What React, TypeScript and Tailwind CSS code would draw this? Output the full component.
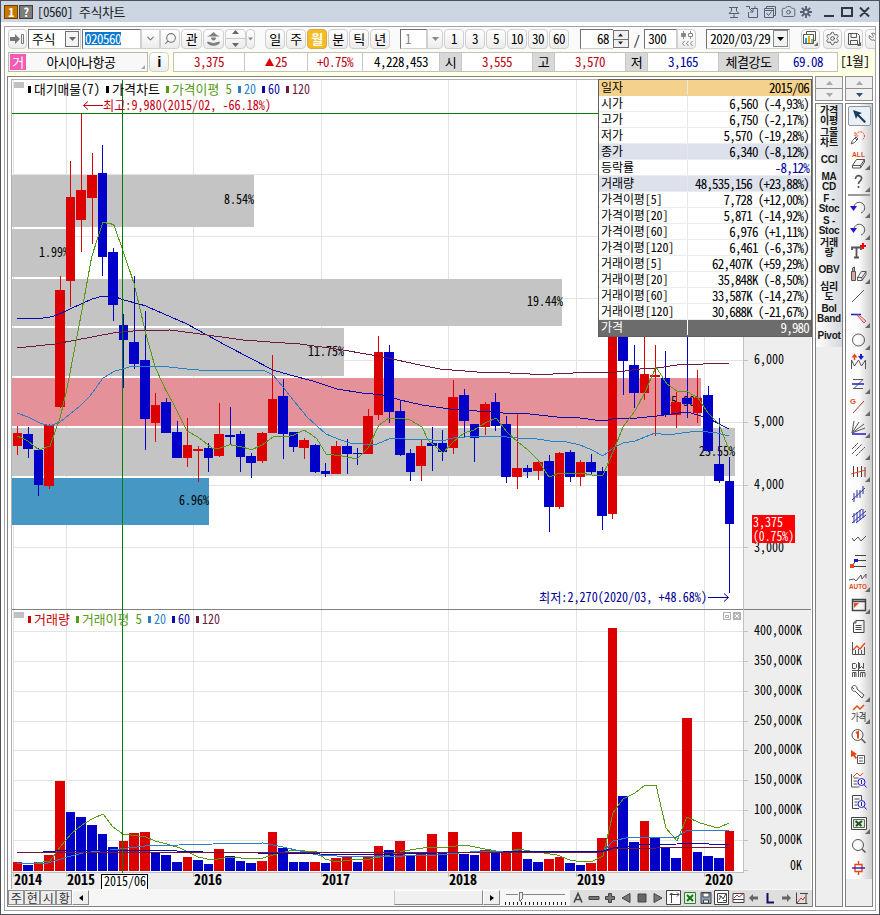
import type { ReactNode } from 'react';
import { Camera, ChevronDown, CopyCheck, Search, Settings, Wrench } from 'lucide-react';
import clsx from 'clsx';

const RED = '#dd0000';
const BLUE = '#0000c8';

const slotX = (i: number) => Math.floor(13.05 + 10.627 * i);

// left edge, body width and wick position of the i-th month
const slot = (i: number) => {
  const x = slotX(i);
  const w = slotX(i + 1) - x - 1;
  return { x, w, mid: x + Math.floor(w / 2) };
};

// --- DATA ---
type Candle = ['R' | 'B', number, number, number, number];

// [direction, high, body top, body bottom, low]
const CANDLES: Candle[] = [
  ['R', 426, 433, 446, 455], ['B', 427, 434, 449, 458], ['B', 448, 450, 485, 496], ['R', 424, 425, 486, 489],
  ['R', 276, 290, 407, 408], ['R', 161, 197, 281, 307], ['R', 113, 190, 220, 252], ['R', 153, 175, 198, 244],
  ['B', 145, 173, 257, 276], ['B', 248, 252, 305, 321], ['B', 314, 325, 340, 388], ['B', 276, 342, 364, 369],
  ['B', 311, 360, 419, 450], ['R', 393, 405, 423, 442], ['B', 398, 402, 433, 433], ['B', 421, 432, 458, 458],
  ['R', 418, 445, 458, 467], ['R', 446, 449, 451, 482], ['B', 443, 448, 458, 472], ['R', 403, 434, 456, 457],
  ['B', 407, 435, 437, 444], ['B', 431, 434, 457, 472], ['B', 453, 456, 463, 478], ['R', 432, 433, 461, 463],
  ['R', 355, 399, 433, 433], ['B', 379, 396, 434, 459], ['B', 432, 432, 447, 452], ['R', 438, 440, 448, 459],
  ['B', 444, 445, 472, 473], ['B', 463, 471, 474, 477], ['R', 441, 446, 474, 474], ['B', 439, 446, 454, 474],
  ['B', 448, 453, 454, 465], ['R', 409, 416, 454, 454], ['R', 336, 352, 415, 420], ['B', 345, 352, 412, 423],
  ['B', 400, 411, 455, 456], ['B', 449, 453, 472, 481], ['R', 440, 446, 466, 481], ['B', 427, 443, 446, 471],
  ['B', 430, 443, 452, 461], ['R', 380, 397, 448, 454], ['B', 389, 395, 421, 437], ['B', 424, 424, 438, 462],
  ['R', 402, 404, 427, 435], ['B', 393, 402, 426, 431], ['B', 416, 424, 477, 483], ['R', 414, 468, 477, 489],
  ['B', 465, 468, 472, 478], ['R', 461, 462, 471, 480], ['B', 455, 461, 507, 532], ['R', 452, 453, 507, 509],
  ['B', 450, 452, 477, 482], ['R', 460, 462, 477, 486], ['B', 454, 462, 472, 474], ['B', 467, 471, 516, 530],
  ['R', 290, 300, 514, 519], ['B', 290, 310, 361, 395], ['B', 345, 365, 393, 408], ['R', 330, 374, 393, 400],
  ['R', 345, 375, 377, 436], ['B', 351, 378, 415, 417], ['R', 392, 402, 415, 428], ['B', 320, 398, 404, 418],
  ['R', 370, 398, 413, 423], ['B', 386, 395, 451, 452], ['B', 418, 464, 481, 483], ['B', 457, 481, 524, 593],
];

const VOLUMES =
  'R862 B865 R862 R855 R781 B812 B817 B825 B834 B847 R841 R833 R832 B852 B855 B862 R857 B860 B864 R849 B856 B861 B863 R861 R832 B848 B862 B862 R862 B863 R858 R856 B862 R857 R846 B850 R841 B856 R852 R834 B852 R832 B854 B855 R850 B852 R852 R832 B859 B862 R859 R857 B863 B865 R863 R838 R628 B796 B842 R821 B838 B847 B858 R718 B852 B856 B858 R831'.split(' ');

const PRICE_LINES = [
  { color: '#2a7fc8', points: '17,413 28,417 40,423 50,426 60,422 80,406 90,396 103,378 115,371 133,366 160,366 187,369 210,371 233,370 263,370 273,375 283,387 290,396 307,417 326,434 338,439 350,443 363,444 377,444 389,439 400,438 410,440 423,439 442,441 453,438 477,436 507,437 517,438 537,439 550,441 567,442 580,445 592,450 603,456 613,448 623,443 635,441 655,433 667,435 698,431 717,433 729,436' },
  { color: '#0a0aaa', points: '17,319 43,318 52,316.7 60,313.7 72,308 92,299 103,296 115,296.7 123,299.7 145,305.7 187,324 227,346 273,370 290,375 313,381 337,389 362,393 383,395 400,400 422,405 450,409 477,411 495,411 503,413 530,414 557,417 580,418 603,421 617,418 637,418 657,416 687,412 698,415 710,419 719,424 729,429' },
  { color: '#6e1a40', points: '17,348 55,344 92,337 113,333 133,331 170,330 200,334 243,340 270,342 300,344 343,350 383,357 420,365 440,369 477,372 510,373 530,374 553,374 573,373 617,372 640,369 657,368 677,365 703,364 729,363' },
  { color: '#559a14', points: '17,436 22,438 28,441 39,450 50,446 60,418 66.7,390 81.7,311.7 91.7,256.7 102.7,222.7 110,223.3 114,225.3 122.7,250 134,283.3 145.7,333.3 155,366.7 165.7,390 173,403 187,431 198,437 212,448 218,448.7 230,444.7 241.7,447 251.7,449.7 262,445 273,437 283,436.7 293,435.7 304,430 312,435 317,439 326,454 340,455.7 357,459 368,448 379,425 389,418 400,418 410,420 422,427 428,440 443,453 453,442 464,433 474,430 485,423 496,418 507,432 518,442 528,450 538,460 549,477 560,473 570,474 581,473 592,475 603,475 613,452 623,427 635,411 645,392 656,367 667,384 677,391 688,392 698,398 708,413 719,424 729,450' },
];

const VOLUME_LINES = [
  { color: '#559a14', points: '17,863 30,864 50,861 60,847 72,833 82,825 92,819 103,814 113,827 123,834 146,837 155,841 167,844 180,848 188,852 198,857 212,860 230,857 252,859 263,858 273,855 293,850 317,852 325,859 337,862 350,860 370,859 390,855 403,851 430,847 448,847 465,845 485,849 507,853 517,849 537,852 557,855 570,860 582,862 593,861 603,856 613,813 623,799 635,793 645,785 656,785 666,828 677,841 687,817 700,823 718,828 729,823' },
  { color: '#2a7fc8', points: '17,864 48,863 67,857 83,853 100,851 120,849 145,846 213,844 263,843 283,847 300,851 318,855 337,856 370,857 437,855 470,852 517,851 603,852 613,841 630,837 657,837 675,838 688,830 729,830' },
  { color: '#0a0aaa', points: '43,852 67,850 150,850 203,852 257,853 320,854 370,855 437,853 503,852 513,851 603,851 613,848 637,845 677,844 688,843 729,845' },
  { color: '#6e1a40', points: '17,853 370,852 603,852 613,849 657,848 729,847' },
];

// volume profile bars
const PROFILE = [
  { y: 175, h: 52, x2: 254, color: '#c4c4c4', label: '8.54%', base: 204, end: 254 },
  { y: 229, h: 48, x2: 67, color: '#c4c4c4', label: '1.99%', base: 257, end: 69 },
  { y: 279, h: 47, x2: 562, color: '#c4c4c4', label: '19.44%', base: 306, end: 563 },
  { y: 328, h: 48, x2: 344, color: '#c4c4c4', label: '11.75%', base: 356, end: 344 },
  { y: 378, h: 48, x2: 701, color: '#e59199', label: '25.90%', base: 406, end: 701 },
  { y: 428, h: 48, x2: 735, color: '#c4c4c4', label: '25.55%', base: 456, end: 735 },
  { y: 478, h: 47, x2: 209, color: '#4697c4', label: '6.96%', base: 505, end: 209 },
];

const YEARS: [string, number][] = [['2014', 13], ['2015', 66], ['2016', 193], ['2017', 321], ['2018', 448], ['2019', 576], ['2020', 704]];
const PRICE_GRID = [174, 236, 298, 360, 422, 485, 547];
const VOLUME_GRID: [string, number][] = [
  ['400,000K', 631], ['350,000K', 661], ['300,000K', 691], ['250,000K', 721],
  ['200,000K', 750], ['150,000K', 780], ['100,000K', 810], ['50,000K', 840],
];

const QUOTE_ROWS: [string, string][] = [
  ['일자', '2015/06'],
  ['시가', '6,560 (-4,93%)'],
  ['고가', '6,750 (-2,17%)'],
  ['저가', '5,570 (-19,28%)'],
  ['종가', '6,340 (-8,12%)'],
  ['등락률', '-8,12%'],
  ['거래량', '48,535,156 (+23,88%)'],
  ['가격이평[5]', '7,728 (+12,00%)'],
  ['가격이평[20]', '5,871 (-14,92%)'],
  ['가격이평[60]', '6,976 (+1,11%)'],
  ['가격이평[120]', '6,461 (-6,37%)'],
  ['거래이평[5]', '62,407K (+59,29%)'],
  ['거래이평[20]', '35,848K (-8,50%)'],
  ['거래이평[60]', '33,587K (-14,27%)'],
  ['거래이평[120]', '30,688K (-21,67%)'],
  ['가격', '9,980'],
];

// --- CHART ---
interface LabelProps {
  x: number;
  y: number;
  w: number;
  fill?: string;
  bold?: boolean;
  children: string;
}

function Label({ x, y, w, fill = '#000', bold, children }: LabelProps) {
  return (
    <text x={x} y={y} fill={fill} fontSize={bold ? 14 : 13} fontWeight={bold ? 700 : 400} textLength={w} lengthAdjust="spacingAndGlyphs" className="whitespace-pre tracking-normal">
      {children}
    </text>
  );
}

function Legend({ y, items }: { y: number; items: [string, number, number, string][] }) {
  return (
    <g>
      <rect x={14} y={y - 12} width={10} height={6} fill="#c0c0c0" />
      {items.map(([text, x, w, color]) => (
        <g key={text}>
          <rect x={x} y={y - 8} width={3} height={7} fill={color} />
          <Label x={x + 6} y={y} w={w} fill={color}>{text}</Label>
        </g>
      ))}
    </g>
  );
}

function StockChart() {
  return (
    <svg width="799" height="809" viewBox="12 80 799 809" className="block bg-white">
      <g shapeRendering="crispEdges">
        <rect x={744} y={80} width={67} height={809} fill="#eeeeee" />
        <rect x={12} y={873} width={799} height={16} fill="#eeeeee" />
        <g fill="#e3e3e3">
          {YEARS.map(([year, x]) => <rect key={year} x={x} y={80} width={1} height={792} />)}
          {PRICE_GRID.map((y) => <rect key={y} x={13} y={y} width={731} height={1} />)}
          {VOLUME_GRID.map(([t, y]) => <rect key={t} x={13} y={y} width={731} height={1} />)}
        </g>
        {PROFILE.map((b) => <rect key={b.y} x={12} y={b.y} width={b.x2 - 12} height={b.h} fill={b.color} />)}
      </g>
      {PROFILE.map((b) => (
        <Label key={b.y} x={b.end - b.label.length * 6} y={b.base} w={b.label.length * 6}>{b.label}</Label>
      ))}
      <g shapeRendering="crispEdges">
        {CANDLES.map(([dir, high, top, bottom, low], i) => {
          const { x, w, mid } = slot(i);
          return (
            <g key={i} fill={dir === 'R' ? RED : BLUE}>
              <rect x={mid} y={high} width={1} height={low - high} />
              <rect x={x} y={top} width={w} height={Math.max(bottom - top, 1)} />
            </g>
          );
        })}
        {VOLUMES.map((v, i) => {
          const { x, w } = slot(i);
          const top = Number(v.slice(1));
          return <rect key={i} x={x} y={top} width={w} height={871 - top} fill={v[0] === 'R' ? RED : BLUE} />;
        })}
        {[...PRICE_LINES, ...VOLUME_LINES].map((l) => (
          <polyline key={l.points} points={l.points} fill="none" stroke={l.color} strokeWidth={1} />
        ))}
        <rect x={12} y={609} width={799} height={1} fill="#808080" />
        <rect x={12} y={872} width={732} height={1} fill="#c0c0c0" />
        <rect x={743} y={80} width={1} height={793} fill="#c0c0c0" />
        {[...PRICE_GRID, ...VOLUME_GRID.map((v) => v[1]), 870].map((y) => (
          <rect key={y} x={744} y={y} width={4} height={1} fill="#c0c0c0" />
        ))}
        {YEARS.map(([year, x]) => <rect key={year} x={x} y={873} width={1} height={4} fill="#c0c0c0" />)}
        <rect x={12} y={113} width={731} height={1} fill="#008000" />
        <rect x={122} y={80} width={1} height={793} fill="#008000" />
      </g>

      <Legend
        y={94}
        items={[
          ['대기매물(7)', 28, 66, '#000'],
          ['가격차트', 106, 48, '#000'],
          ['가격이평 5', 166, 60, '#559a14'],
          ['20', 238, 12, '#2a7fc8'],
          ['60', 262, 12, '#0a0aaa'],
          ['120', 286, 18, '#6e1a40'],
        ]}
      />
      <Legend
        y={624}
        items={[
          ['거래량', 28, 36, '#cc0000'],
          ['거래이평 5', 76, 60, '#559a14'],
          ['20', 148, 12, '#2a7fc8'],
          ['60', 172, 12, '#0a0aaa'],
          ['120', 196, 18, '#6e1a40'],
        ]}
      />

      <path d="M103 105.5H83.5M88 101.5L83.5 105.5L88 109.5" fill="none" stroke="#c00010" />
      <Label x={103} y={110} w={168} fill="#c00010">최고:9,980(2015/02, -66.18%)</Label>
      <path d="M708 597.5H728M724 593.5L728.5 597.5L724 601.5" fill="none" stroke="#000090" />
      <Label x={539} y={602} w={168} fill="#000090">최저:2,270(2020/03, +48.68%)</Label>

      {['6,000', '5,000', '4,000', '3,000'].map((t, i) => (
        <Label key={t} x={754} y={[364, 426, 489, 552][i]} w={30}>{t}</Label>
      ))}
      <rect x={752} y={515} width={43} height={28} fill="#ff0000" />
      <Label x={753} y={527} w={30} fill="#fff">3,375</Label>
      <Label x={753} y={541} w={41} fill="#fff">(0.75%)</Label>
      {VOLUME_GRID.map(([t, y]) => (
        <Label key={t} x={802 - t.length * 6} y={y + 4} w={t.length * 6}>{t}</Label>
      ))}
      <Label x={790} y={870} w={12}>0K</Label>

      {YEARS.map(([year, x]) => <Label key={year} x={x + 1} y={885} w={28} bold>{year}</Label>)}
      <rect x={101.5} y={874.5} width={46} height={15} fill="#fff" stroke="#000" />
      <Label x={104} y={886} w={42}>2015/06</Label>

      <g fill="none" stroke="#b0b0b0" shapeRendering="crispEdges">
        <rect x={723.5} y={612.5} width={7} height={7} />
        <rect x={725.5} y={615} width={3} height={2} />
        <rect x={733.5} y={612.5} width={7} height={7} fill="#b8b8b8" />
      </g>
      <path d="M735 614l4 4m0-4l-4 4" stroke="#fff" />
    </svg>
  );
}

function QuoteTable() {
  return (
    <div className="absolute -top-px right-0 w-[214px] border border-[#606060] bg-white text-[12px] tracking-[-0.1px]">
      {QUOTE_ROWS.map(([name, value]) => (
        <div
          key={name}
          className={clsx(
            'flex h-4 items-center border-b leading-none',
            name === '일자' && 'border-[#f5d28c] bg-[#f5d28c]',
            (name === '종가' || name === '거래량') && 'border-[#dde1ec] bg-[#dde1ec]',
            name === '가격' ? 'border-[#6c6c6c] bg-[#6c6c6c] text-white' : 'border-[#ececec]',
          )}
        >
          <span className={clsx('flex h-full w-[89px] items-center border-r pb-px pl-[2px]', name === '가격' ? 'border-white' : 'border-[#e8e8e8]')}>{name}</span>
          <span className={clsx('flex-1 pb-px pr-[2px] text-right text-[13px] tracking-[-0.8px]', name === '등락률' && 'text-[#0000a0]')}>{value}</span>
        </div>
      ))}
    </div>
  );
}

// --- TOOLBAR ---
function Btn({ className, children }: { className?: string; children?: ReactNode }) {
  return (
    <button className={clsx('flex h-5 shrink-0 items-center justify-center rounded-[4px] border border-[#cfcfcf] bg-gradient-to-b from-white to-[#ececec] pb-px leading-none', className)}>
      {children}
    </button>
  );
}

function Field({ className, children }: { className?: string; children?: ReactNode }) {
  return (
    <div className={clsx('flex h-5 shrink-0 items-center border border-[#d0d0d0] border-t-[#707070] border-l-[#707070] bg-white pb-px leading-none', className)}>
      {children}
    </div>
  );
}

function Tri({ up, className = 'fill-[#666]' }: { up?: boolean; className?: string }) {
  return (
    <svg width="7" height="4" viewBox="0 0 7 4" className={className}>
      <path d={up ? 'M3.5 0L7 4H0z' : 'M0 0h7L3.5 4z'} />
    </svg>
  );
}

function TitleBar() {
  return (
    <div className="flex h-[21px] shrink-0 items-center bg-[#cbd6e2] pl-[3px] pr-2">
      <span className="flex h-[14px] w-[14px] items-center justify-center border border-[#704000] bg-[#c87800] text-[12px] font-bold leading-none text-white">1</span>
      <span className="ml-px flex h-[14px] w-[14px] items-center justify-center border border-[#404040] bg-[#7d7d7d] text-[12px] font-bold leading-none text-white">?</span>
      <span className="ml-1 pb-px leading-none text-[#222]">[0560] 주식차트</span>
      <div className="ml-auto flex items-center text-[#566070]">
        <svg width="14" height="14" viewBox="0 0 14 14" fill="none" stroke="currentColor" className="mr-1">
          <path d="M2 2.5h9M4.500 3v3L2 8.500h10L9.500 6V3M7 9v4M3 12.500h8" />
        </svg>
        <svg width="14" height="14" viewBox="0 0 14 14" fill="none" stroke="currentColor" className="mr-1">
          <path d="M6 3.500h6.500v9h-9V7M4 3l4 4M8 4v3H5M1 1.500h3M4.500 1v3M10 1v3" />
        </svg>
        <svg width="14" height="14" viewBox="0 0 14 14" fill="none" stroke="currentColor" className="mr-1">
          <path d="M3.500 3.500v-2h9v9h-2M1.500 3.500h9v9h-9zM1.500 5.500h9M3.500 8l2 2.500 3-4" />
        </svg>
        <Camera size={15} strokeWidth={1.5} className="mr-[3px]" />
        <svg width="14" height="14" viewBox="0 0 14 14" fill="none" stroke="currentColor" strokeWidth="1.800" className="mr-[9px]">
          <circle cx="7" cy="7" r="2.500" />
          <path d="M7 1v3M7 10v3M1 7h3M10 7h3M2.800 2.800l2 2M9.200 9.200l2 2M2.800 11.200l2-2M9.200 4.800l2-2" />
        </svg>
        <svg width="49" height="12" viewBox="0 0 49 12" fill="none" stroke="#303846" strokeWidth="2">
          <path d="M2 10h10M20 2h10v8H20zM38 1.500l9 9M47 1.500l-9 9" />
        </svg>
      </div>
    </div>
  );
}

function Toolbar() {
  return (
    <div className="flex h-6 shrink-0 items-center overflow-hidden bg-[#fafafa] pl-px">
      <Btn className="w-[19px]">
        <svg width="15" height="12" viewBox="0 0 15 12">
          <path d="M0 4h5V1l5 5-5 5V8H0z" fill="#777" />
          <path d="M11.500 1.500h2v9h-2z" fill="none" stroke="#777" />
        </svg>
      </Btn>
      <Field className="ml-px w-[53px] justify-between pl-[3px] pr-px">
        주식
        <span className="flex h-4 w-[14px] items-center justify-center border border-[#707070] bg-[#f4f4f4]"><Tri /></span>
      </Field>
      <Field className="ml-px w-[59px] pl-[2px]"><span className="bg-[#0878d0] text-white">020560</span></Field>
      <Btn className="w-[19px] rounded-none"><ChevronDown size={11} strokeWidth={2.5} className="text-[#777]" /></Btn>
      <Btn className="w-5 rounded-l-none"><Search size={13} className="-scale-x-100 text-[#777]" /></Btn>
      <Btn className="ml-px w-[21px]">관</Btn>
      <Btn className="ml-px w-[21px] to-[#d4d4d4]">
        <svg width="13" height="14" viewBox="0 0 13 14" fill="#808080">
          <path d="M3 3l3.500-3L10 3l3 1.500H0zM4 5.500h5c0 4-5 4-5 0zM0 10c3-1 4 1 6.500 1s3.500-2 6.500-1c-1 5-12 5-13 0z" />
        </svg>
      </Btn>
      <Btn className="ml-px w-[21px] flex-col gap-1">
        <Tri up />
        <span className="h-px w-full bg-[#c8c8c8]" />
        <Tri />
      </Btn>
      <Btn className="w-[9px]"><Tri className="w-[5px] fill-[#888]" /></Btn>

      <div className="ml-[10px] flex gap-px">
        {['일', '주', '월', '분', '틱', '년'].map((t) => (
          <Btn key={t} className={clsx('w-5', t === '월' && 'border-[#d8a850] bg-[#f8bc20] bg-none font-bold text-white')}>{t}</Btn>
        ))}
      </div>
      <Field className="ml-[10px] w-[27px] bg-[#f0f0f0] pl-1 text-[#888]">1</Field>
      <Btn className="w-4 rounded-l-none"><Tri className="fill-[#888]" /></Btn>
      <div className="ml-px flex gap-px">
        {['1', '3', '5', '10', '30', '60'].map((t) => <Btn key={t} className="w-5">{t}</Btn>)}
      </div>

      <Field className="ml-[11px] w-[33px] justify-end border-r-0 pr-1">68</Field>
      <div className="flex h-[18px] w-4 flex-col border border-[#707070] bg-[#f0f0f0]">
        <span className="flex flex-1 items-center justify-center border-b border-[#707070]"><Tri up className="w-[5px] fill-[#222]" /></span>
        <span className="flex flex-1 items-center justify-center"><Tri className="w-[5px] fill-[#222]" /></span>
      </div>
      <span className="w-4 text-center leading-none">/</span>
      <Field className="w-[33px] pl-[3px]">300</Field>
      <Btn className="w-[19px] rounded-l-none">
        <svg width="14" height="16" viewBox="0 0 14 16" stroke="#888" fill="none">
          <path d="M3.500 0v8M10.500 0v8M4.500 10l-2 2.500 2 2.500M8.500 10l-2 2.500 2 2.500M12.500 10l-2 2.500 2 2.500" />
          <path d="M1.500 2.500h4v3h-4z" fill="#888" />
          <path d="M8.500 2.500h4v3h-4z" fill="#fff" />
        </svg>
      </Btn>
      <Field className="ml-[10px] w-[84px] justify-between pl-[3px] pr-px">
        2020/03/29
        <span className="flex h-[17px] w-[15px] items-center justify-center border border-[#888] bg-[#f2f2f2]"><Tri className="fill-black" /></span>
      </Field>

      <Btn className="ml-[11px] w-[19px]">
        <svg width="15" height="15" viewBox="0 0 15 15" fill="none" stroke="#555">
          <path d="M3.500 3V.500h9v9H11" />
          <path d="M.500 3.500h10v9H.500z" fill="#fff" />
          <path d="M3 12V7" stroke="#20a0d0" strokeWidth="2" />
          <path d="M6 12V5" stroke="#f0a800" strokeWidth="2" />
          <path d="M9 12V8" stroke="#60b030" strokeWidth="1.500" />
          <path d="M15 11v4h-4z" fill="#666" stroke="none" />
        </svg>
      </Btn>
      <Btn className="ml-[3px] w-[19px]"><Settings size={15} strokeWidth={1.6} className="text-[#555]" /></Btn>
      <Btn className="ml-[2px] w-[19px]">
        <svg width="14" height="14" viewBox="0 0 14 14" fill="none" stroke="#555">
          <path d="M1.500 1.500h9l2 2v9h-11zM4 2v3.500h5.500V2M3.500 12V8.500h7V12" />
          <path d="M14 10v4h-4z" fill="#666" stroke="none" />
        </svg>
      </Btn>
      <div className="ml-[2px] w-[10px] overflow-hidden">
        <Btn className="w-[19px]"><Wrench size={14} strokeWidth={1.6} className="-scale-x-100 text-[#666]" /></Btn>
      </div>
    </div>
  );
}

const CELL = 'flex h-[18px] shrink-0 items-center justify-center border-r border-[#c8c8c8] pb-px';

function QuoteBar() {
  return (
    <div className="flex h-[25px] shrink-0 items-center bg-[#ffffe4] pb-[3px] leading-none">
      <div className="ml-px flex h-5 w-[140px] items-center border border-[#b8b8b8] bg-[#f8f8f8] px-px">
        <span className="flex h-4 w-4 items-center justify-center bg-[#f45cb4] pb-px text-white">거</span>
        <span className="flex-1 pb-px pr-1 text-center">아시아나항공</span>
        <svg width="6" height="6" className="mt-2.5 fill-[#a8a8a8]"><path d="M5 1v4H1z" /></svg>
      </div>
      <Btn className="ml-px w-5 font-['Liberation_Sans'] text-[15px] font-bold">i</Btn>
      <div className="ml-1 flex h-5 items-center border border-[#c0c0c0] bg-white">
        <span className={clsx(CELL, 'w-[71px] text-[#c00010]')}>3,375</span>
        <span className={clsx(CELL, 'w-[63px] text-[#c00010]')}>
          <svg width="9" height="8" className="mr-px fill-[#dd0000]"><path d="M4.500 0L9 8H0z" /></svg>25
        </span>
        <span className={clsx(CELL, 'w-[55px] text-[#c00010]')}>+0.75%</span>
        <span className={clsx(CELL, 'w-[77px]')}>4,228,453</span>
        <span className={clsx(CELL, 'w-[22px] bg-[#d8d8d8]')}>시</span>
        <span className={clsx(CELL, 'w-[71px] text-[#c00010]')}>3,555</span>
        <span className={clsx(CELL, 'w-[22px] bg-[#d8d8d8]')}>고</span>
        <span className={clsx(CELL, 'w-[71px] text-[#c00010]')}>3,570</span>
        <span className={clsx(CELL, 'w-[22px] bg-[#d8d8d8]')}>저</span>
        <span className={clsx(CELL, 'w-[71px] text-[#0000a0]')}>3,165</span>
        <span className={clsx(CELL, 'w-[60px] bg-[#d8d8d8]')}>체결강도</span>
        <span className="w-[58px] pb-px text-center text-[#0000a0]">69.08</span>
      </div>
      <span className="ml-[2px] pb-[3px]">[1월]</span>
    </div>
  );
}

// --- SIDE COLUMNS ---
const INDICATORS = [['가격', '이평'], ['그물', '차트'], ['CCI'], ['MA', 'CD'], ['F -', 'Stoc'], ['S -', 'Stoc'], ['거래', '량'], ['OBV'], ['심리', '도'], ['Bol', 'Band'], ['Pivot']];

function Spinner({ active }: { active?: boolean }) {
  return (
    <div className="flex h-[25px] shrink-0 flex-col border border-[#909090]">
      <span className="flex flex-1 items-center justify-center bg-[#f0f0f0]"><Tri up className="fill-[#a8a8a8]" /></span>
      <span className="flex flex-1 items-center justify-center border-t border-[#909090] bg-[#f0f0f0]"><Tri className={active ? 'fill-[#34506c]' : 'fill-[#a8a8a8]'} /></span>
    </div>
  );
}

function IndicatorColumn() {
  return (
    <div className="flex w-7 flex-col">
      <Spinner />
      <div className="mt-[2px] flex-1 border border-[#808080] bg-[#eeeeee]">
        <div className="bg-gradient-to-r from-white to-[#d4d8dc] pt-px">
          {INDICATORS.map((lines, i) => (
            <div key={i} className="flex h-[22px] flex-col items-center justify-center text-[10px] font-bold leading-[10px] tracking-[-0.3px] text-[#181818] [font-feature-settings:normal] font-['Liberation_Sans','Noto_Sans_CJK_KR',sans-serif]">
              {lines.map((l) => <span key={l} className="whitespace-nowrap">{l}</span>)}
            </div>
          ))}
        </div>
      </div>
    </div>
  );
}

const O = '#e84818';
const V = '#2018d0';
const CORNER = <path d="M23 16v5h-5z" fill="#666" stroke="none" />;

function Tag({ x, y, w, size, children }: { x: number; y: number; w: number; size: number; children: string }) {
  return (
    <text x={x} y={y} fontSize={size} textLength={w} lengthAdjust="spacingAndGlyphs" fill={O} stroke="none" className="font-['Liberation_Sans'] font-bold tracking-normal [font-feature-settings:normal]">
      {children}
    </text>
  );
}

const TOOLS: ReactNode[] = [
  <><path d="M4 17l1.500-3.500L9 10l2 2-3.500 3.500zM8 11l2 2" /><path d="M9 8a4.300 4.300 0 1 1 6 5M8 5v4h4" stroke={O} strokeDasharray="2 .7" /></>,
  <><Tag x={5} y={8} w={13} size={7}>ALL</Tag><path d="M5.500 16.500l4-6h8l-4 6zM5.500 16.500v2.500h8v-2.500M13.500 19l4-6v-2.500" />{CORNER}</>,
  <><path d="M8.500 8c0-5 7-4 6 0-.500 2-3 2-3 5M11.500 15v2" strokeWidth="1.600" />{CORNER}</>,
  <><path d="M7 9a5.500 5.500 0 1 1 7 7" /><path d="M3 9h7l-3.500 5z" fill={V} stroke="none" />{CORNER}</>,
  <><path d="M7 9a5.500 5.500 0 1 1 7 7" /><path d="M3 9h7l-3.500 5z" fill={V} stroke="none" />{CORNER}</>,
  <><path d="M5 9V6.500h9V9M9.500 7v10M7 16.500h5" strokeWidth="1.800" /><path d="M13 5h6M16 2v6" stroke="red" strokeWidth="2" /></>,
  <><path d="M4.500 8.500h4v9h-4zM5.500 8V5l2-1v4" fill="#dba8a0" /><path d="M10.500 14.500l4-6h4.500l-4 6zM10.500 14.500v3h4.500v-3M15 17.500l4-6v-3" />{CORNER}</>,
  <path d="M5 17L17 5" />,
  <><path d="M4 7.500h10" stroke={V} strokeWidth="1.500" /><path d="M10 8l7 8 2-2-7-6z" fill="#ffd0d0" stroke="#d05050" />{CORNER}</>,
  <><circle cx="11.500" cy="11" r="6" />{CORNER}</>,
  <><path d="M4.500 18V9l3 6 4-6 3 6 4-6v9" /><path d="M7.500 9V5" stroke={O} strokeWidth="1.500" /><path d="M4.500 6.500L7.500 2.500l3 4z" fill={O} stroke="none" /><path d="M14 5V3" stroke={V} strokeWidth="2" /><path d="M11 5h6l-3 4z" fill={V} stroke="none" /></>,
  <><path d="M6 6.500h10M6 15.500h10M16 6.500L7 15.500" /><path d="M5 11h12" stroke={V} strokeWidth="1.500" />{CORNER}</>,
  <><path d="M6 18L17 6" stroke="#a04030" /><Tag x={3} y={9} w={6} size={8}>G</Tag>{CORNER}</>,
  <><path d="M5 16L7 4M5 16L12 5M5 16L17 7M5 16l13-5" /><path d="M5 17h14" stroke={V} strokeWidth="1.500" />{CORNER}</>,
  <><path d="M5 10l6-6M5 15L15 5M9 17l9-9" strokeDasharray="3 .5" />{CORNER}</>,
  <><path d="M6.500 5v11M10.500 6v10M14.500 5v11M18 6v10" stroke="#703030" /><path d="M4 13l15-4" stroke={O} />{CORNER}</>,
  <path d="M5 17L18 5M7 10v9M10 7v8M13 7v8M16 3v8" stroke="#3030a0" />,
  <path d="M5 12L15 4M5 18L19 6M7 8v10M10 7v10M13 5v10M16 4v9M9 18l10-8" stroke="#3030b0" />,
  <path d="M5 11l2 3 4-4 3 4 5-5" />,
  <><path d="M8 6.500h11M10 11.500h9M4 17.500h15M5 17l5-7" stroke="#444" /><path d="M7 10h4v3H7z" fill={V} stroke="none" /><path d="M3 15h4v4H3z" fill={O} stroke="none" /></>,
  <><path d="M2 9l5-1 2 2 5-6 1 4 4-5v4" /><Tag x={2} y={18} w={18} size={8}>AUTO</Tag>{CORNER}</>,
  <><path d="M5.500 6.500h13v11h-13zM5.500 8.500h13" strokeWidth="1.500" stroke="#444" /><path d="M7 10h5l-5 5z" fill={O} stroke="none" />{CORNER}</>,
  <path d="M9 5.500h8v12H6.500V8zM9 5.500V8H6.500M8.500 10.500h6M8.500 12.500h6M8.500 14.500h6" stroke="#444" />,
  <><path d="M5.500 5v12.500H18M8.500 13v4M11.500 12v5M14.500 13v4M17.500 10v7" /><path d="M6 13l4-4 3 3 5-6" stroke={O} strokeWidth="1.300" /></>,
  <path d="M5.500 4.500v5h3l1-1v-3l-1-1zM12.500 4v5.500l2-2 2 2V4M11.500 3v15M5 11.500h13M5.500 18v-4.500H9V18M7.500 13.500V18M13.500 18v-4.500H18V18M15.500 13.500V18" />,
  <><path d="M5 6c1-3 6-1 5 2l7 6-2 3-7-7c-2 1-4-1-3-4l2 2z" />{CORNER}</>,
  <><path d="M6 7l4-4 3 3 4-4" stroke={O} strokeWidth="1.500" /><text x="4" y="18" fontSize="10" fill="#333" stroke="none" textLength="15" lengthAdjust="spacingAndGlyphs">가격</text>{CORNER}</>,
  <><circle cx="10.500" cy="10" r="5.500" /><path d="M14.500 14l4 4" strokeWidth="1.500" /><path d="M9 8l2-1v6.500" stroke={O} strokeWidth="2" /></>,
  <><path d="M4 3l6 4-2 1 2 3-1.500 1-2-3L4 10z" fill={O} stroke="none" /><path d="M10.500 8.500h7v8h-7zM12 11h4M12 14h4" fill="#fff" /></>,
  <><path d="M4.500 5v13h8" /><path d="M6 8l4-4 3 3 3-3" stroke={O} /><path d="M6.500 9h5M6.500 12h4M6.500 15h4" /><circle cx="14.500" cy="13" r="3.500" stroke={V} /><path d="M17 15.500l2.500 3M14.500 11v4" stroke={V} /></>,
  <><path d="M12 17.500H5.500v-13h9V9M7.500 8h5M7.500 11h3M7.500 14h3" stroke="#444" /><circle cx="14.500" cy="13" r="3.500" stroke={V} /><path d="M17 15.500l2.500 3M14.500 11v4" stroke={V} /></>,
  <><path d="M4.500 4.500h15v12h-15z" fill="#fff" stroke="#444" /><path d="M6.500 6.500h11v8h-11z" fill="#dcebdc" stroke="#507050" /><path d="M8.500 8l6 5M15 8l-6 5" stroke="#205020" strokeWidth="2" />{CORNER}</>,
  <><circle cx="11" cy="10" r="5.500" /><path d="M15 14l3.500 3.500" strokeWidth="1.500" /></>,
  <><path d="M8 7.500h7v7H8zM11.500 4v4M11.500 14v4" stroke={O} strokeWidth="1.400" /><path d="M5 11h13" stroke={V} strokeWidth="1.400" /></>,
];

function ToolIcon({ children }: { children: ReactNode }) {
  return (
    <svg width="24" height="22" viewBox="0 0 24 22" fill="none" stroke="#555" className="ml-px block">
      {children}
    </svg>
  );
}

function ToolColumn() {
  return (
    <div className="ml-[2px] flex w-7 flex-col">
      <Spinner active />
      <div className="mt-[2px] flex-1 border border-[#808080] bg-[#eeeeee]">
        <div className="bg-gradient-to-r from-white via-[#fafafa] to-[#cccccc] pt-px">
          <div className="flex h-[22px] items-center justify-center">
            <span className="flex h-5 w-[23px] items-center justify-center rounded-[2px] border border-[#8898a8] bg-[#eaf0f5]">
              <svg width="15" height="15" viewBox="0 0 15 15"><path d="M1 1l9 3-3 1.500 7 7-1.500 1.500-7-7L4 10z" fill="#183c5c" /></svg>
            </span>
          </div>
          {TOOLS.slice(0, 3).map((icon, i) => <ToolIcon key={i}>{icon}</ToolIcon>)}
          <div className="mx-[2px] my-px h-[2px] bg-[#999]" />
          {TOOLS.slice(3).map((icon, i) => <ToolIcon key={i}>{icon}</ToolIcon>)}
        </div>
      </div>
    </div>
  );
}

// --- BOTTOM BAR ---
const BOTTOM_ICONS: ReactNode[] = [
  <path d="M4 12.500l4-9 4 9M5.500 9.500h5" strokeWidth="1.600" />,
  <path d="M3 6.500h10v3H3z" fill="#777" />,
  <path d="M6.500 3.500h3v3h3v3h-3v3h-3v-3h-3v-3h3z" fill="#777" />,
  <path d="M12 3.500v9L4 8z" fill="#777" />,
  <path d="M4 4h8v8H4z" fill="#666" />,
  <path d="M4 3.500v9L12 8z" fill="#777" />,
  <><path d="M.500.500h14v14H.500z" fill="#fff" /><path d="M5.500 13V3M4 4.500h9M3.500 5l2-2 2 2M11 2.500l2 2-2 2" /></>,
  <><path d="M2.500 2.500h11v11h-11z" fill="#dff0df" stroke="#308030" /><path d="M5 5l6 6M11 5l-6 6" stroke="#187018" strokeWidth="2" /></>,
  <><path d="M3 2.500h10v11H3z" fill="#8aa0b8" /><path d="M5 3h6v4H5zM5.500 10h5v3h-5z" fill="#fff" /></>,
  <><path d="M.500.500h14v14H.500z" fill="#fff" /><path d="M3.500 3.500h9v9h-9zM5 10l2-4 2 3 3-5M9 10.500h3M5 6h2" /></>,
  <><path d="M3 3.500h11v9H3z" fill="#fff" /><path d="M4 8l3-3 2 2 4-3" stroke="#c03030" /><path d="M3 9.500h11" /></>,
  <path d="M3 8l4-4v2.500h5v3H7V12z" fill="#666" stroke="none" />,
  <path d="M5.500 3v9.500H12" stroke="#101060" strokeWidth="2" />,
  <path d="M13 8L9 4v2.500H4v3h5V12z" fill="#666" stroke="none" />,
  <><path d="M2.500 2.500v11h11M6 3.500h8M12 3v10" /><path d="M3 13l4-5 2 2 2-3" stroke="#d03030" /></>,
];

function BottomBar() {
  return (
    <div className="flex h-[17px] shrink-0 items-center bg-[#f6f6f6] leading-none">
      {['주', '현', '시', '황'].map((t) => (
        <span key={t} className="flex h-[15px] w-4 items-center justify-center border border-[#909090] bg-[#ececec] text-[12px] text-[#333]">{t}</span>
      ))}
      <span className="flex h-[15px] w-[17px] items-center justify-center border border-white border-r-[#888] border-b-[#888] bg-[#f0f0f0]">
        <svg width="4" height="6"><path d="M4 0v6L0 3z" /></svg>
      </span>
      <span className="ml-[305px] h-[15px] w-[89px] border border-white border-r-[#888] border-b-[#888] border-l-[#c8c8c8] bg-[#f0f0f0]" />
      <span className="flex h-[15px] w-[17px] items-center justify-center border border-white border-r-[#888] border-b-[#888] bg-[#f0f0f0]">
        <svg width="4" height="6"><path d="M0 0v6l4-3z" /></svg>
      </span>
      <svg width="70" height="16" viewBox="0 0 70 16" className="shrink-0" shapeRendering="crispEdges">
        <path d="M6 4.500h12M23 4.500h42" stroke="#888" />
        <path d="M19 2h3v7l-1.500 2-1.500-2z" fill="#eee" stroke="#777" />
        <path d="M5 13.500h62" stroke="#222" strokeWidth="3" strokeDasharray="1 3" />
      </svg>
      <div className="flex flex-1 bg-[#dedede]">
        {BOTTOM_ICONS.map((icon, i) => (
          <svg key={i} width="16" height="16" viewBox="0 0 16 16" fill="none" stroke="#444">{icon}</svg>
        ))}
      </div>
    </div>
  );
}

export default function App() {
  return (
    <div className="flex h-[915px] w-[880px] flex-col border border-[#50505a] bg-white font-['Noto_Sans_Mono_CJK_KR','Noto_Sans_CJK_KR',sans-serif] text-[13px] tracking-[-0.5px] text-black [font-feature-settings:'hwid']">
      <TitleBar />
      <div className="mx-[3px] mb-[3px] mt-1 flex min-h-0 flex-1 flex-col border border-[#a0a4a8] pl-[2px]">
        <Toolbar />
        <QuoteBar />
        <div className="flex min-h-0 flex-1 pb-[3px]">
          <div className="flex w-[806px] flex-col border border-[#808080]">
            <div className="ml-[3px] mt-[2px] flex flex-col border-l border-t border-[#b0b0b0]">
              <div className="relative h-[809px]">
                <StockChart />
                <QuoteTable />
              </div>
            </div>
            <BottomBar />
          </div>
          <div className="ml-[2px] flex">
            <IndicatorColumn />
            <ToolColumn />
          </div>
        </div>
      </div>
    </div>
  );
}
